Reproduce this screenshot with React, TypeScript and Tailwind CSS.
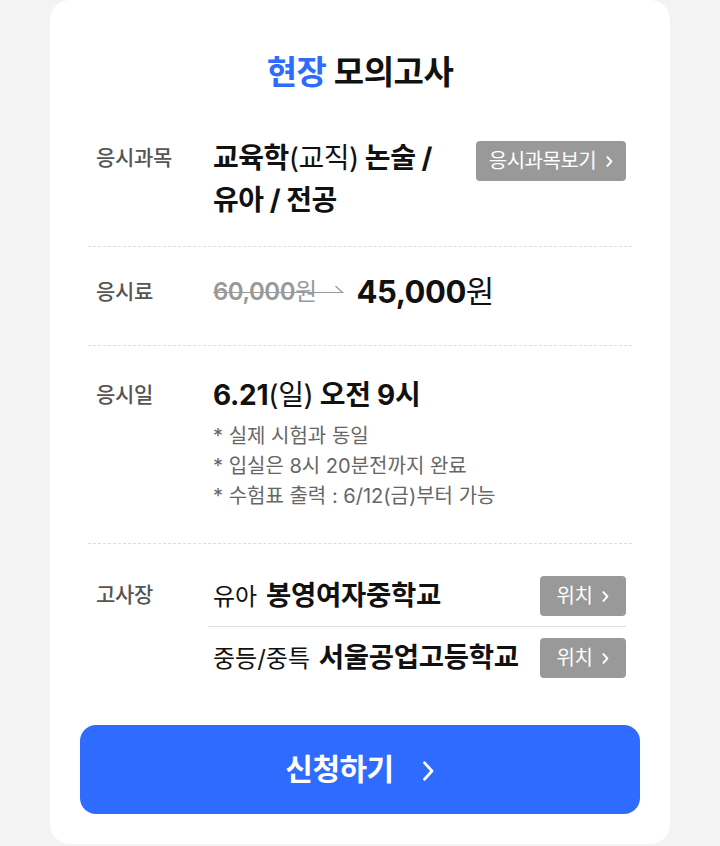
import React from 'react'

const font = { fontFamily: 'Inter, "Noto Sans CJK KR", "Noto Sans", sans-serif' }

function Chevron({ className = '', width = 2 }: { className?: string; width?: number }) {
  return (
    <svg viewBox="0 0 10 16" className={className} fill="none" stroke="currentColor" strokeWidth={width} strokeLinecap="round" strokeLinejoin="round">
      <path d="M3 2.5l5 5.5-5 5.5" />
    </svg>
  )
}

function GrayButton({ label, className = '' }: { label: string; className?: string }) {
  return (
    <button className={`flex h-[40px] shrink-0 items-center justify-center gap-[9px] rounded-[4px] bg-[#999999] text-[20px] text-white ${className}`}>
      <span className="leading-none tracking-[-0.5px]">{label}</span>
      <Chevron className="h-[13px] w-[8px]" width={2.4} />
    </button>
  )
}

function Row({ label, lead, pad, center = false, last = false, children }: {
  label: string
  lead: string
  pad: string
  center?: boolean
  last?: boolean
  children: React.ReactNode
}) {
  return (
    <div className={`flex pl-[8px] pr-[6px] ${pad} ${center ? 'items-center' : 'items-start'} ${last ? '' : 'border-b border-dashed border-[#dddddd]'}`}>
      <div className={`w-[117px] shrink-0 text-[21px] font-medium tracking-[-0.3px] text-[#555555] ${lead}`}>{label}</div>
      <div className="min-w-0 flex-1">{children}</div>
    </div>
  )
}

export default function App() {
  return (
    <div className="min-h-screen bg-[#f3f3f3]" style={font}>
      <div className="mx-auto w-[620px] rounded-[20px] bg-white pb-[30px] pt-[50px]">
        <h1 className="text-center text-[33px] font-bold leading-[44px] tracking-[-0.5px] text-[#111111]">
          <span className="text-[#2f6bff]">현장</span> 모의고사
        </h1>

        <div className="mt-[43px] px-[38px]">
          <Row label="응시과목" lead="leading-[42px]" pad="pb-[25px]">
            <div className="flex items-start justify-between">
              <p className="text-[28px] font-bold leading-[42px] tracking-[-0.5px] text-[#111111]">
                교육학<span className="font-normal">(교직)</span> 논술 /<br />유아 / 전공
              </p>
              <GrayButton label="응시과목보기" className="mt-[4px] w-[150px]" />
            </div>
          </Row>

          <Row label="응시료" lead="leading-[42px]" pad="pt-[24px] pb-[32px]" center>
            <div className="flex items-center">
              <span className="flex items-center">
                <span className="text-[24px] font-semibold leading-[42px] tracking-[-0.5px] text-[#999999] line-through decoration-[#999999] decoration-1">
                  60,000<span className="font-normal">원</span>
                </span>
                <svg width="30" height="14" viewBox="0 0 30 14" className="-ml-[2px]" fill="none" stroke="#999999" strokeWidth={1.2}>
                  <path d="M0 7.5h27.5l-7-6.5" />
                </svg>
              </span>
              <span className="ml-[12px] text-[31px] font-bold leading-[42px] tracking-[-0.5px] text-[#111111]">
                45,000<span className="font-normal">원</span>
              </span>
            </div>
          </Row>

          <Row label="응시일" lead="leading-[42px]" pad="pt-[28px] pb-[32px]">
            <p className="text-[28px] font-bold leading-[42px] tracking-[-0.3px] text-[#111111]">
              6.21<span className="font-normal">(일)</span> 오전 9시
            </p>
            <ul className="mt-[5px] text-[20px] leading-[30px] text-[#666666]">
              <li>* 실제 시험과 동일</li>
              <li>* 입실은 8시 20분전까지 완료</li>
              <li>* 수험표 출력 : 6/12(금)부터 가능</li>
            </ul>
          </Row>

          <Row label="고사장" lead="leading-[40px]" pad="pt-[31px]" last>
            <div className="-ml-[5px]">
              <div className="flex items-center justify-between border-b border-[#dddddd] pb-[9px] pl-[5px]">
                <p className="text-[24px] leading-[40px] text-[#111111]">
                  유아 <span className="ml-[2px] text-[27.5px] font-bold tracking-[-0.3px]">봉영여자중학교</span>
                </p>
                <GrayButton label="위치" className="w-[86px]" />
              </div>
              <div className="flex items-center justify-between pl-[5px] pt-[10px]">
                <p className="text-[24px] leading-[40px] text-[#111111]">
                  중등/중특 <span className="ml-[2px] text-[27.5px] font-bold tracking-[-0.3px]">서울공업고등학교</span>
                </p>
                <GrayButton label="위치" className="w-[86px]" />
              </div>
            </div>
          </Row>
        </div>

        <div className="mt-[46px] px-[30px]">
          <button className="flex h-[89px] w-full items-center justify-center gap-[26px] rounded-[16px] bg-[#2f6bff] text-white">
            <span className="text-[30px] font-bold tracking-[-0.5px]">신청하기</span>
            <Chevron className="mt-[2px] h-[24px] w-[15px]" width={1.8} />
          </button>
        </div>
      </div>
    </div>
  )
}
